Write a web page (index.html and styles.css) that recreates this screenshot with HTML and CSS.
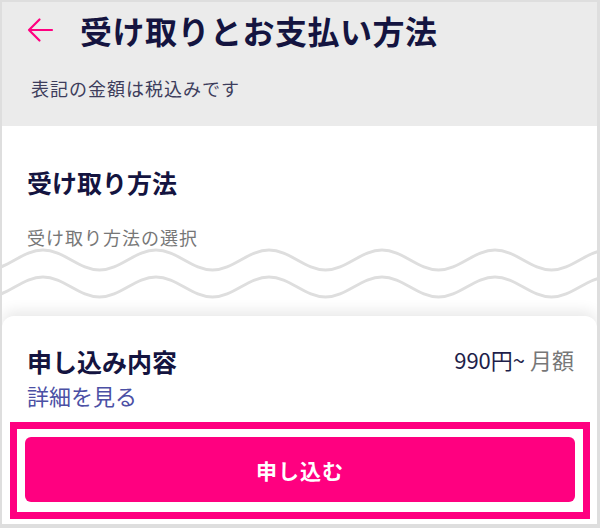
FILE: index.html
```html
<!DOCTYPE html>
<html lang="ja">
<head>
  <meta charset="UTF-8" />
  <meta name="viewport" content="width=device-width, initial-scale=1.0" />
  <title>受け取りとお支払い方法</title>
  <link rel="stylesheet" href="styles.css">
</head>
<body>
  <div class="frame">
    <header class="cabecera">
      <div class="barra">
        <svg class="volver" width="28" height="28" viewBox="0 0 28 28">
          <path d="M26 14 H3 M13.5 3.5 L3 14 L13.5 24.5" fill="none" stroke="#ff0080" stroke-width="2.2" stroke-linecap="round" stroke-linejoin="round"/>
        </svg>
        <h1>受け取りとお支払い方法</h1>
      </div>
      <p class="nota">表記の金額は税込みです</p>
    </header>

    <section class="recibir">
      <h2>受け取り方法</h2>
      <p class="sub">受け取り方法の選択</p>
      <svg class="ondas" width="595" height="54" viewBox="0 0 595 54">
        <path d="M -15.5 24 c 20.6 0 35.9 -20 56.5 -20 s 35.9 20 56.5 20 s 35.9 -20 56.5 -20 s 35.9 20 56.5 20 s 35.9 -20 56.5 -20 s 35.9 20 56.5 20 s 35.9 -20 56.5 -20 s 35.9 20 56.5 20 s 35.9 -20 56.5 -20 s 35.9 20 56.5 20 s 35.9 -20 56.5 -20 s 35.9 20 56.5 20" fill="none" stroke="#dedede" stroke-width="3"/>
        <path d="M -15.5 51 c 20.6 0 35.9 -20 56.5 -20 s 35.9 20 56.5 20 s 35.9 -20 56.5 -20 s 35.9 20 56.5 20 s 35.9 -20 56.5 -20 s 35.9 20 56.5 20 s 35.9 -20 56.5 -20 s 35.9 20 56.5 20 s 35.9 -20 56.5 -20 s 35.9 20 56.5 20 s 35.9 -20 56.5 -20 s 35.9 20 56.5 20" fill="none" stroke="#dedede" stroke-width="3"/>
      </svg>
    </section>

    <section class="pedido">
      <div class="fila">
        <h2>申し込み内容</h2>
        <p class="precio">990円~ <span class="gris">月額</span></p>
      </div>
      <a class="detalle" href="#">詳細を見る</a>
      <div class="marco">
        <button class="boton">申し込む</button>
      </div>
    </section>
  </div>
</body>
</html>
```

FILE: styles.css
```css
* {
  box-sizing: border-box;
}
body {
  margin: 0;
  font-family: "Noto Sans CJK JP", "Noto Sans", sans-serif;
  background: #fff;
  color: #141440;
}
h1, h2, p {
  margin: 0;
}
.frame {
  width: 600px;
  height: 528px;
  border-style: solid;
  border-color: #dedede;
  border-width: 2px 3px 4px 2px;
  display: flex;
  flex-direction: column;
  overflow: hidden;
}
.cabecera {
  background: #ebebeb;
  height: 124px;
  padding: 12px 0 0 25px;
}
.barra {
  display: flex;
  align-items: center;
  height: 32px;
}
.volver {
  margin-left: -1px;
  margin-right: 26px;
}
h1 {
  font-size: 32px;
  line-height: 32px;
  font-weight: 700;
  letter-spacing: 0.5px;
}
.nota {
  margin-top: 30px;
  padding-left: 4px;
  font-size: 18px;
  line-height: 24px;
  letter-spacing: 1px;
  color: #3d3d5c;
}
.recibir {
  padding-top: 40px;
  background: #fff;
}
.recibir h2 {
  padding-left: 25px;
}
h2 {
  font-size: 25px;
  line-height: 32px;
  font-weight: 700;
}
.sub {
  margin-top: 27px;
  padding-left: 25px;
  font-size: 18px;
  line-height: 24px;
  letter-spacing: 1px;
  color: #777;
}
.ondas {
  display: block;
  margin-top: -3px;
}
.pedido {
  flex: 1;
  margin-top: 16px;
  background: #fff;
  border-radius: 12px 12px 0 0;
  box-shadow: 0 -5px 14px rgba(0, 0, 0, 0.09);
  padding: 29px 7px 0 8px;
}
.fila {
  display: flex;
  justify-content: space-between;
  align-items: center;
  padding: 0 16px 0 17px;
}
.precio {
  font-size: 22px;
  line-height: 32px;
  margin-top: -5px;
  color: #1e1e4a;
}
.gris {
  color: #777;
}
.detalle {
  display: block;
  margin-top: 4px;
  padding-left: 17px;
  font-size: 22px;
  line-height: 28px;
  color: #4b50a5;
  text-decoration: none;
}
.marco {
  margin-top: 13px;
  border: 7px solid #ff0080;
  padding: 8px 8px 10px 8px;
}
.boton {
  display: block;
  width: 100%;
  height: 65px;
  border: none;
  border-radius: 6px;
  background: #ff0080;
  color: #fff;
  font-family: inherit;
  font-size: 21px;
  font-weight: 700;
  letter-spacing: 1px;
  cursor: pointer;
}
```
